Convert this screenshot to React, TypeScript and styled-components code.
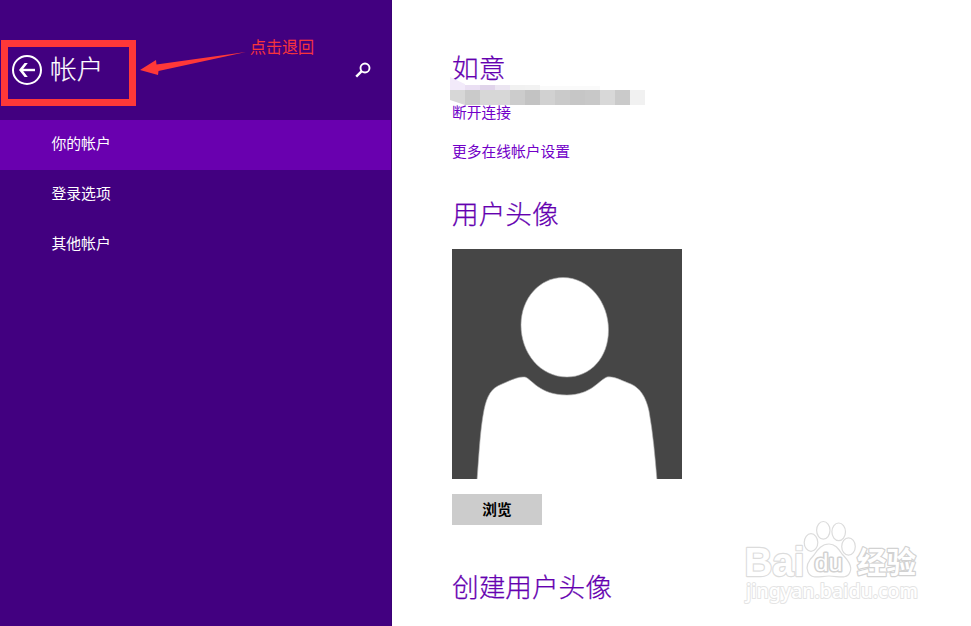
import React from 'react';
import styled, { createGlobalStyle } from 'styled-components';

const GlobalStyle = createGlobalStyle`
  * { box-sizing: border-box; }
  body {
    margin: 0;
    background: #fff;
    overflow: hidden;
    font-family: "Noto Sans CJK SC", sans-serif;
  }
`;

const Page = styled.div`
  display: flex;
  width: 971px;
  height: 626px;
  position: relative;
  overflow: hidden;
`;

const Sidebar = styled.aside`
  width: 392px;
  height: 100%;
  background: #420080;
  border-right: 1px solid #3a0075;
  color: #fff;
`;

const SidebarHeader = styled.header`
  display: flex;
  align-items: center;
  height: 120px;
  padding: 20px 20px 0 11px;
`;

const BackButton = styled.button`
  display: flex;
  padding: 0;
  border: 0;
  background: none;
  margin-right: 7px;
`;

const Title = styled.h1`
  margin: -5px 0 0;
  font-size: 26.67px;
  font-weight: 300;
  line-height: 40px;
  flex: 1;
  -webkit-text-stroke: 0.2px #fff;
`;

const NavItem = styled.a<{ $active?: boolean }>`
  display: flex;
  align-items: center;
  height: 50px;
  padding: 0 0 5px 51.5px;
  font-size: 14.8px;
  background: ${(p) => (p.$active ? '#6900af' : 'transparent')};
`;

const Content = styled.main`
  flex: 1;
  display: flex;
  flex-direction: column;
  align-items: flex-start;
  padding: 47px 0 0 60px;
`;

const Heading = styled.h2<{ $gap?: number }>`
  margin: ${(p) => p.$gap ?? 0}px 0 0;
  font-size: 26.67px;
  font-weight: 300;
  line-height: 40px;
  color: #6500b0;
  -webkit-text-stroke: 0.25px #6500b0;
`;

const Link = styled.a<{ $gap: number }>`
  margin-top: ${(p) => p.$gap}px;
  font-size: 14.75px;
  line-height: 20px;
  color: #7200c8;
`;

const Avatar = styled.svg`
  display: block;
  margin-top: 16px;
  width: 230px;
  height: 230px;
`;

const BrowseButton = styled.button`
  width: 90px;
  height: 31px;
  margin-top: 15px;
  padding: 0 0 3px;
  border: 0;
  background: #ccc;
  color: #000;
  font: 700 14.67px "Noto Sans CJK SC", sans-serif;
`;

const Overlay = styled.svg`
  position: absolute;
  inset: 0;
  pointer-events: none;
`;

const Callout = styled.div`
  position: absolute;
  left: 1px;
  top: 40px;
  width: 135px;
  height: 66px;
  border: 7px solid #ff3838;
`;

const CalloutText = styled.span`
  position: absolute;
  left: 250px;
  top: 34px;
  font-size: 16px;
  font-weight: 300;
  line-height: 24px;
  color: #ff3838;
  -webkit-text-stroke: 0.3px #ff3838;
`;

const mosaic = ['#d7d7d7', '#cacaca', '#d7d7d7', '#d7d7d7', '#cccccc', '#c3c3c3', '#d1d1d1', '#cacaca', '#c6c6c6', '#c8c8c8', '#d8d8d8', '#cacaca', '#f1f1f1'];
const mosaicTop = ['#f2eafa', '#eadff3', '#e0d4ea', '#ebe5f1', '#f1f1f1', '#f2f2f2'];

function Watermark() {
  return (
    <g fill="#fff" stroke="#dcdcdc" strokeWidth="1.2" strokeLinejoin="round">
      <text x="744.5" y="575.5" fontSize="40" fontFamily="Liberation Sans, sans-serif" fontWeight="700" textLength="60" lengthAdjust="spacingAndGlyphs" paintOrder="stroke" strokeWidth="2.4">Bai</text>
      <ellipse cx="811" cy="542.5" rx="6.8" ry="8.8" />
      <ellipse cx="823.3" cy="530.3" rx="6.7" ry="8.8" />
      <ellipse cx="838.7" cy="531.8" rx="6.8" ry="8.8" />
      <ellipse cx="848.5" cy="546.5" rx="6.8" ry="8.6" />
      <path d="M829 544C822 544 818 549 814 555C809 560 805 566 808 572C812 580 820 576 829 576C838 576 847 580 850 572C853 566 847 559 842 554C838 548 835 544 829 544Z" />
      <text x="814.5" y="571" fontSize="23.5" fontFamily="Liberation Sans, sans-serif" fontWeight="400" textLength="28" lengthAdjust="spacingAndGlyphs" paintOrder="stroke" strokeWidth="3" stroke="#d2d2d2">du</text>
      <text x="857" y="572.5" fontSize="29.5" fontFamily="Noto Sans CJK SC, sans-serif" fontWeight="700" textLength="59" lengthAdjust="spacingAndGlyphs" paintOrder="stroke" strokeWidth="2.4" stroke="#d2d2d2">经验</text>
      <text x="746" y="598" fontSize="20.5" fontFamily="Noto Sans, sans-serif" fontWeight="500" textLength="172" lengthAdjust="spacingAndGlyphs" paintOrder="stroke" strokeWidth="2" stroke="#e4e4e4">jingyan.baidu.com</text>
    </g>
  );
}

export default function App() {
  return (
    <>
      <GlobalStyle />
      <Page>
        <Sidebar>
          <SidebarHeader>
            <BackButton aria-label="返回">
              <svg width="32" height="40" viewBox="0 0 32 40" fill="none" stroke="#fff">
                <circle cx="16" cy="20" r="14" strokeWidth="2" />
                <path d="M10.5 20H24" strokeWidth="2.4" />
                <path d="M16.8 13H13.6L8 20L13.6 27H16.8L11.4 20Z" fill="#fff" stroke="none" />
              </svg>
            </BackButton>
            <Title>帐户</Title>
            <svg width="16" height="16" viewBox="0 0 16 16" fill="none" stroke="#fff" strokeWidth="1.9">
              <circle cx="10" cy="6" r="4.5" />
              <path d="M6.7 9.2L1.2 14.7" strokeWidth="2.4" />
            </svg>
          </SidebarHeader>
          <nav>
            <NavItem $active>你的帐户</NavItem>
            <NavItem>登录选项</NavItem>
            <NavItem>其他帐户</NavItem>
          </nav>
        </Sidebar>
        <Content>
          <Heading>如意</Heading>
          <Link $gap={15}>断开连接</Link>
          <Link $gap={19}>更多在线帐户设置</Link>
          <Heading $gap={32}>用户头像</Heading>
          <Avatar viewBox="0 0 230 230">
            <path d="M0 0H230V230H0Z" fill="#464646" />
            <g fill="#fff" stroke="#aaa" strokeWidth="0.6">
              <path d="M111 28.5C137 28.5 156.5 53 156.5 81C156.5 109 138 128 115 128C88 128 69 104 69 76C69 49 88 28.5 111 28.5Z" />
              <path d="M25 231C27 207 28 181 32 161C35 147 39 139 50 135C59 131 66 127.5 73 128C80 130 87 146 115 146C139 146 147 131 155 128C163 127 170 132 179 135C188 139 194 148 197 162C201 184 203 207 205 231Z" />
            </g>
          </Avatar>
          <BrowseButton>浏览</BrowseButton>
          <Heading $gap={41}>创建用户头像</Heading>
        </Content>
        <Overlay width="971" height="626" viewBox="0 0 971 626">
          <defs>
            <clipPath id="brush"><path d="M450 77L467 85H645V105H465L450 100Z" /></clipPath>
          </defs>
          <g clipPath="url(#brush)" shapeRendering="crispEdges">
            {mosaicTop.map((c, i) => <rect key={i} x={450 + i * 15} y={i ? 85 : 77} width="15" height={i ? 5 : 13} fill={c} />)}
            <rect x="540" y="86" width="60" height="4" fill="#fafafa" />
            {mosaic.map((c, i) => <rect key={i} x={450 + i * 15} y="90" width="15" height="15" fill={c} />)}
          </g>
          <path d="M140 70L156 60L156.5 64.5L246 52L158.5 71L158 75Z" fill="#ff3838" />
          <Watermark />
        </Overlay>
        <Callout />
        <CalloutText>点击退回</CalloutText>
      </Page>
    </>
  );
}
